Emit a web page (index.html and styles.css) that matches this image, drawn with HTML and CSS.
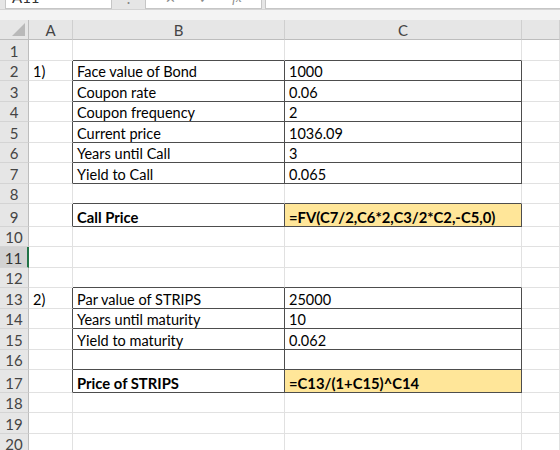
FILE: index.html
```html
<!DOCTYPE html>
<html lang="en">
<head>
  <meta charset="UTF-8" />
  <meta name="viewport" content="width=device-width, initial-scale=1.0"/>
  <title>Bond Pricing</title>
  <link rel="stylesheet" href="styles.css">
</head>
<body>

  <div class="toolbar">
    <div class="fbar">
      <div class="namebox">A11</div>
      <div class="grip">⋮</div>
      <div class="fbtns">
        <span class="ico">✕</span>
        <span class="ico">✓</span>
        <span class="ico fx">fx</span>
      </div>
      <div class="finput"></div>
    </div>
  </div>

  <table class="sheet">
    <colgroup>
      <col class="col-hd">
      <col class="col-a">
      <col class="col-b">
      <col class="col-c">
      <col>
    </colgroup>
    <thead>
      <tr>
        <th class="corner"><span class="tri"></span></th>
        <th>A</th>
        <th>B</th>
        <th>C</th>
        <th></th>
      </tr>
    </thead>
    <tbody>
      <tr><th>1</th><td></td><td class="eb"></td><td class="eb"></td><td></td></tr>
      <tr><th>2</th><td class="er">1)</td><td class="er eb">Face value of Bond</td><td class="er eb">1000</td><td></td></tr>
      <tr><th>3</th><td class="er"></td><td class="er eb">Coupon rate</td><td class="er eb">0.06</td><td></td></tr>
      <tr><th>4</th><td class="er"></td><td class="er eb">Coupon frequency</td><td class="er eb">2</td><td></td></tr>
      <tr><th>5</th><td class="er"></td><td class="er eb">Current price</td><td class="er eb">1036.09</td><td></td></tr>
      <tr><th>6</th><td class="er"></td><td class="er eb">Years until Call</td><td class="er eb">3</td><td></td></tr>
      <tr><th>7</th><td class="er"></td><td class="er eb">Yield to Call</td><td class="er eb">0.065</td><td></td></tr>
      <tr><th>8</th><td></td><td class="eb"></td><td class="eb"></td><td></td></tr>
      <tr class="tall"><th>9</th><td class="er"></td><td class="er eb bold">Call Price</td><td class="er eb bold hl">=FV(C7/2,C6*2,C3/2*C2,-C5,0)</td><td></td></tr>
      <tr><th>10</th><td></td><td></td><td></td><td></td></tr>
      <tr><th class="sel">11</th><td></td><td></td><td></td><td></td></tr>
      <tr><th>12</th><td></td><td class="eb"></td><td class="eb"></td><td></td></tr>
      <tr><th>13</th><td class="er">2)</td><td class="er eb">Par value of STRIPS</td><td class="er eb">25000</td><td></td></tr>
      <tr><th>14</th><td class="er"></td><td class="er eb">Years until maturity</td><td class="er eb">10</td><td></td></tr>
      <tr><th>15</th><td class="er"></td><td class="er eb">Yield to maturity</td><td class="er eb">0.062</td><td></td></tr>
      <tr><th>16</th><td class="er"></td><td class="er eb"></td><td class="er eb"></td><td></td></tr>
      <tr class="tall"><th>17</th><td class="er"></td><td class="er eb bold">Price of STRIPS</td><td class="er eb bold hl">=C13/(1+C15)^C14</td><td></td></tr>
      <tr><th>18</th><td></td><td></td><td></td><td></td></tr>
      <tr><th>19</th><td></td><td></td><td></td><td></td></tr>
      <tr><th>20</th><td></td><td></td><td></td><td></td></tr>
    </tbody>
  </table>

</body>
</html>
```

FILE: styles.css
```css
body {
  margin: 0;
  width: 560px;
  height: 450px;
  overflow: hidden;
  background-color: #fff;
  font-family: Lato, "Open Sans", sans-serif;
}

/* formula bar, only its lower edge is visible */
.toolbar {
  height: 20px;
  overflow: hidden;
  background-color: #f3f3f3;
}

.fbar {
  display: flex;
  height: 24px;
  margin-top: -15px;
  padding-left: 5px;
  background-color: #e6e6e6;
  border-bottom: 1px solid #d4d4d4;
}

.namebox {
  width: 107px;
  box-sizing: border-box;
  background-color: #fff;
  border: 1px solid #c6c6c6;
  padding: 2px 6px;
  font-size: 15px;
  color: #333;
}

.grip {
  width: 33px;
  text-align: center;
  color: #888;
  font-size: 15px;
  line-height: 22px;
}

.fbtns {
  width: 117px;
  box-sizing: border-box;
  display: flex;
  justify-content: space-around;
  align-items: flex-end;
  padding: 0 8px 2px;
  background-color: #fff;
  border: 1px solid #c6c6c6;
}

.ico {
  font-size: 13px;
  color: #8a8a8a;
  line-height: 16px;
}

.fx {
  font-family: "Liberation Serif", serif;
  font-style: italic;
}

.finput {
  flex: 1;
  margin-left: 3px;
  background-color: #fff;
  border: 1px solid #c6c6c6;
  border-right: none;
}

/* sheet grid */
.sheet {
  width: 560px;
  table-layout: fixed;
  border-collapse: separate;
  border-spacing: 0;
  font-size: 14.5px;
}

.col-hd { width: 29px; }
.col-a  { width: 44px; }
.col-b  { width: 212px; }
.col-c  { width: 237px; }

thead th {
  height: 20px;
  box-sizing: border-box;
  padding: 0;
  background-color: #e6e6e6;
  color: #444;
  font-weight: normal;
  font-size: 15px;
  border-right: 1px solid #cfcfcf;
  border-bottom: 1px solid #bdbdbd;
  vertical-align: middle;
}

thead th:first-child {
  border-right-color: #bdbdbd;
}

.corner {
  position: relative;
}

.tri {
  position: absolute;
  right: 3px;
  bottom: 3px;
  width: 0;
  height: 0;
  border-left: 13px solid transparent;
  border-bottom: 13px solid #b9b9b9;
}

tbody tr {
  height: 20.5px;
}

tbody tr.tall {
  height: 22.5px;
}

tbody th {
  padding: 0;
  background-color: #e6e6e6;
  color: #444;
  font-weight: normal;
  font-size: 15px;
  text-align: center;
  border-right: 1px solid #bdbdbd;
  border-bottom: 1px solid #d4d4d4;
  vertical-align: bottom;
  line-height: 17px;
}

tbody th.sel {
  background-color: #d2d2d2;
  color: #333;
  border-right: 2px solid #217346;
}

td {
  padding: 0 3px 0 4px;
  border-right: 1px solid #e1e1e1;
  border-bottom: 1px solid #e1e1e1;
  vertical-align: bottom;
  white-space: nowrap;
  overflow: hidden;
  line-height: 17px;
  color: #000;
}

td.er {
  border-right-color: #4d4d4d;
}

td.eb {
  border-bottom-color: #4d4d4d;
}

.bold {
  font-weight: bold;
  font-size: 14.8px;
}

.hl {
  background-color: #ffe699;
}
```
